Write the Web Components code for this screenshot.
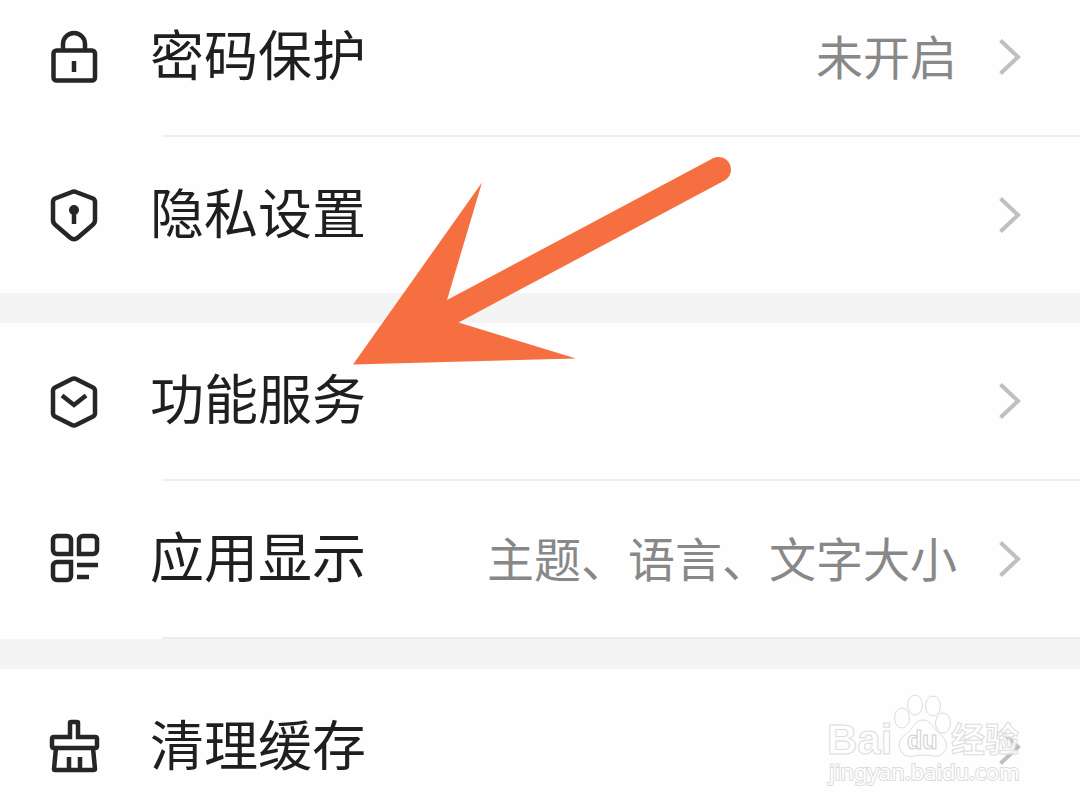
<!DOCTYPE html>
<html lang="zh-CN">
<head>
<meta charset="utf-8">
<meta name="viewport" content="width=device-width, initial-scale=1">
<title>设置</title>
<style>
body {
    margin: 0;
    background-color: #fefefe;
    font-family: "Noto Sans CJK SC", sans-serif;
}
</style>
</head>
<body>

<settings-page>
    <settings-group>
        <settings-row class="first" icon="lock" label="密码保护" value="未开启" line></settings-row>
        <settings-row icon="shield" label="隐私设置"></settings-row>
    </settings-group>
    <settings-group>
        <settings-row icon="service" label="功能服务" line></settings-row>
        <settings-row icon="display" label="应用显示" value="主题、语言、文字大小" line></settings-row>
    </settings-group>
    <settings-group>
        <settings-row icon="brush" label="清理缓存"></settings-row>
    </settings-group>
    <pointer-arrow slot="overlay"></pointer-arrow>
    <site-watermark slot="overlay"></site-watermark>
</settings-page>

<script>
const icons = {
    lock: `
        <path d="M17 22V15a11 11 0 0 1 22 0v7"/>
        <rect x="7.500" y="21.500" width="41.500" height="30" rx="3"/>
        <path d="M28 32v11"/>`,
    shield: `
        <path d="M26 5Q28 4 30 5L47 11.500Q49 12.500 49 15V33Q49 36 46.500 38L32 50.500Q28 54 24 50.500L9.500 38Q7 36 7 33V15Q7 12.500 9 11.500Z"/>
        <circle cx="28" cy="23" r="5" fill="currentColor" stroke="none"/>
        <path d="M28 24v13"/>`,
    service: `
        <path d="M26 6Q28 5 30 6L47 14.500Q49 15.500 49 18V40Q49 42.500 47 43.500L30 52Q28 53 26 52L9 43.500Q7 42.500 7 40V18Q7 15.500 9 14.500Z"/>
        <path d="M16 22.500L28 32L40 22.500"/>`,
    display: `
        <path d="M11 5H21a4 4 0 0 1 4 4V23H11a4 4 0 0 1-4-4V9a4 4 0 0 1 4-4Z"/>
        <path d="M37 5H47a4 4 0 0 1 4 4V19a4 4 0 0 1-4 4H33V9a4 4 0 0 1 4-4Z"/>
        <path d="M11 31H25V45a4 4 0 0 1-4 4H11a4 4 0 0 1-4-4V35a4 4 0 0 1 4-4Z"/>
        <path d="M31 34H52M31 46H43"/>`,
    brush: `
        <path d="M24 18V4q0-1 1-1h6q1 0 1 1V18H49q2 0 2 2v7q0 2-2 2H8q-2 0-2-2V20q0-2 2-2Z"/>
        <path d="M10 29L8 50q0 1 1 1H47q2 0 2-1L47 29M23 38V51M34 38V51"/>`
};

const pageTemplate = document.createElement("template");
pageTemplate.innerHTML = `
<style>
:host {
    display: block;
    position: relative;
    height: 100vh;
    overflow: hidden;
}
main {
    display: flex;
    flex-direction: column;
    gap: 30px;
    background-color: #f4f4f4;
}
</style>
<main><slot></slot></main>
<slot name="overlay"></slot>
`;

class SettingsPage extends HTMLElement {
    constructor() {
        super();
        this.attachShadow({ mode: "open" });
        this.shadowRoot.appendChild(pageTemplate.content.cloneNode(true));
    }
}

const groupTemplate = document.createElement("template");
groupTemplate.innerHTML = `
<style>
:host {
    display: flex;
    flex-direction: column;
    background-color: #fefefe;
}
</style>
<slot></slot>
`;

class SettingsGroup extends HTMLElement {
    constructor() {
        super();
        this.attachShadow({ mode: "open" });
        this.shadowRoot.appendChild(groupTemplate.content.cloneNode(true));
    }
}

const rowTemplate = document.createElement("template");
rowTemplate.innerHTML = `
<style>
:host {
    display: block;
}
button {
    display: flex;
    align-items: center;
    box-sizing: border-box;
    width: 100%;
    padding: 50px 59px 50px 46px;
    border: 0;
    background: none;
    font-family: inherit;
    text-align: left;
    cursor: pointer;
}
/* the list is scrolled a little, so the first row is cut at the top */
:host(.first) button {
    padding-top: 29px;
}
:host([line])::after {
    content: "";
    display: block;
    height: 2px;
    margin-left: 162px;
    background-color: #eeeeee;
}
.icon {
    flex: none;
    width: 56px;
    height: 56px;
    margin-right: 48px;
    color: #262626;
    fill: none;
    stroke: currentColor;
    stroke-width: 4.5;
}
.label {
    flex: 1;
    padding-bottom: 8px;
    font-size: 54px;
    line-height: 48px;
    color: #1f1f1f;
    white-space: nowrap;
}
.value {
    padding-bottom: 4px;
    font-size: 47px;
    line-height: 48px;
    color: #888888;
    white-space: nowrap;
}
.chevron {
    flex: none;
    width: 22px;
    height: 36px;
    margin-left: 42px;
    fill: none;
    stroke: #bfbfc1;
    stroke-width: 4;
}
</style>
<button type="button">
    <svg class="icon" viewBox="0 0 56 56" aria-hidden="true"></svg>
    <span class="label"></span>
    <span class="value"></span>
    <svg class="chevron" viewBox="0 0 22 36" aria-hidden="true"><path d="M1.500 1.500L19 18L1.500 34.500"/></svg>
</button>
`;

class SettingsRow extends HTMLElement {
    constructor() {
        super();
        this.attachShadow({ mode: "open" });
    }

    connectedCallback() {
        const template = rowTemplate.content.cloneNode(true);
        template.querySelector('.icon').innerHTML = icons[this.getAttribute('icon')] || '';
        template.querySelector('.label').textContent = this.getAttribute('label');
        template.querySelector('.value').textContent = this.getAttribute('value') || '';
        this.shadowRoot.appendChild(template);
    }
}

const arrowTemplate = document.createElement("template");
arrowTemplate.innerHTML = `
<style>
:host {
    position: absolute;
    top: 150px;
    left: 350px;
    pointer-events: none;
}
svg {
    display: block;
    width: 390px;
    height: 220px;
    fill: #f66f40;
}
</style>
<svg viewBox="0 0 390 220" aria-hidden="true">
    <path d="M3 214.500L132 32.500L97 150L363 8.300A12.500 12.500 0 0 1 375 30.200L108.500 172.500L226 208.500Z"/>
</svg>
`;

class PointerArrow extends HTMLElement {
    constructor() {
        super();
        this.attachShadow({ mode: "open" });
        this.shadowRoot.appendChild(arrowTemplate.content.cloneNode(true));
    }
}

const watermarkTemplate = document.createElement("template");
watermarkTemplate.innerHTML = `
<style>
:host {
    position: absolute;
    top: 690px;
    right: 50px;
    pointer-events: none;
}
svg {
    display: block;
    width: 210px;
    height: 100px;
    fill: #fefefe;
    fill-opacity: 0.8;
    stroke: #dcdcdc;
    stroke-width: 1;
}
.latin {
    font: bold 42px "Liberation Sans", sans-serif;
}
.du {
    font: bold 25px "Liberation Sans", sans-serif;
    stroke: #d0d0d0;
}
.han {
    font: bold 34px "Noto Sans CJK SC", sans-serif;
}
.site {
    font: 22px "Noto Sans", sans-serif;
    paint-order: stroke;
    stroke-width: 2;
    fill-opacity: 1;
}
</style>
<svg viewBox="0 0 210 100">
    <ellipse cx="82" cy="28" rx="7.500" ry="10"/>
    <ellipse cx="95" cy="15" rx="7.500" ry="10"/>
    <ellipse cx="113" cy="16" rx="7.500" ry="10"/>
    <ellipse cx="123" cy="33" rx="7.500" ry="10"/>
    <path d="M103 30C111 30 113 38 119 43C126 49 129 56 124 62C119 69 111 65 103 65C95 65 87 69 82 63C77 56 79 49 86 44C93 39 95 30 103 30Z"/>
    <text class="latin" x="7" y="64">Bai</text>
    <text class="du" x="87" y="59">du</text>
    <text class="han" x="131" y="62">经验</text>
    <text class="site" x="9" y="90">jingyan.baidu.com</text>
</svg>
`;

class SiteWatermark extends HTMLElement {
    constructor() {
        super();
        this.attachShadow({ mode: "open" });
        this.shadowRoot.appendChild(watermarkTemplate.content.cloneNode(true));
    }
}

window.customElements.define("settings-page", SettingsPage);
window.customElements.define("settings-group", SettingsGroup);
window.customElements.define("settings-row", SettingsRow);
window.customElements.define("pointer-arrow", PointerArrow);
window.customElements.define("site-watermark", SiteWatermark);
</script>
</body>
</html>
